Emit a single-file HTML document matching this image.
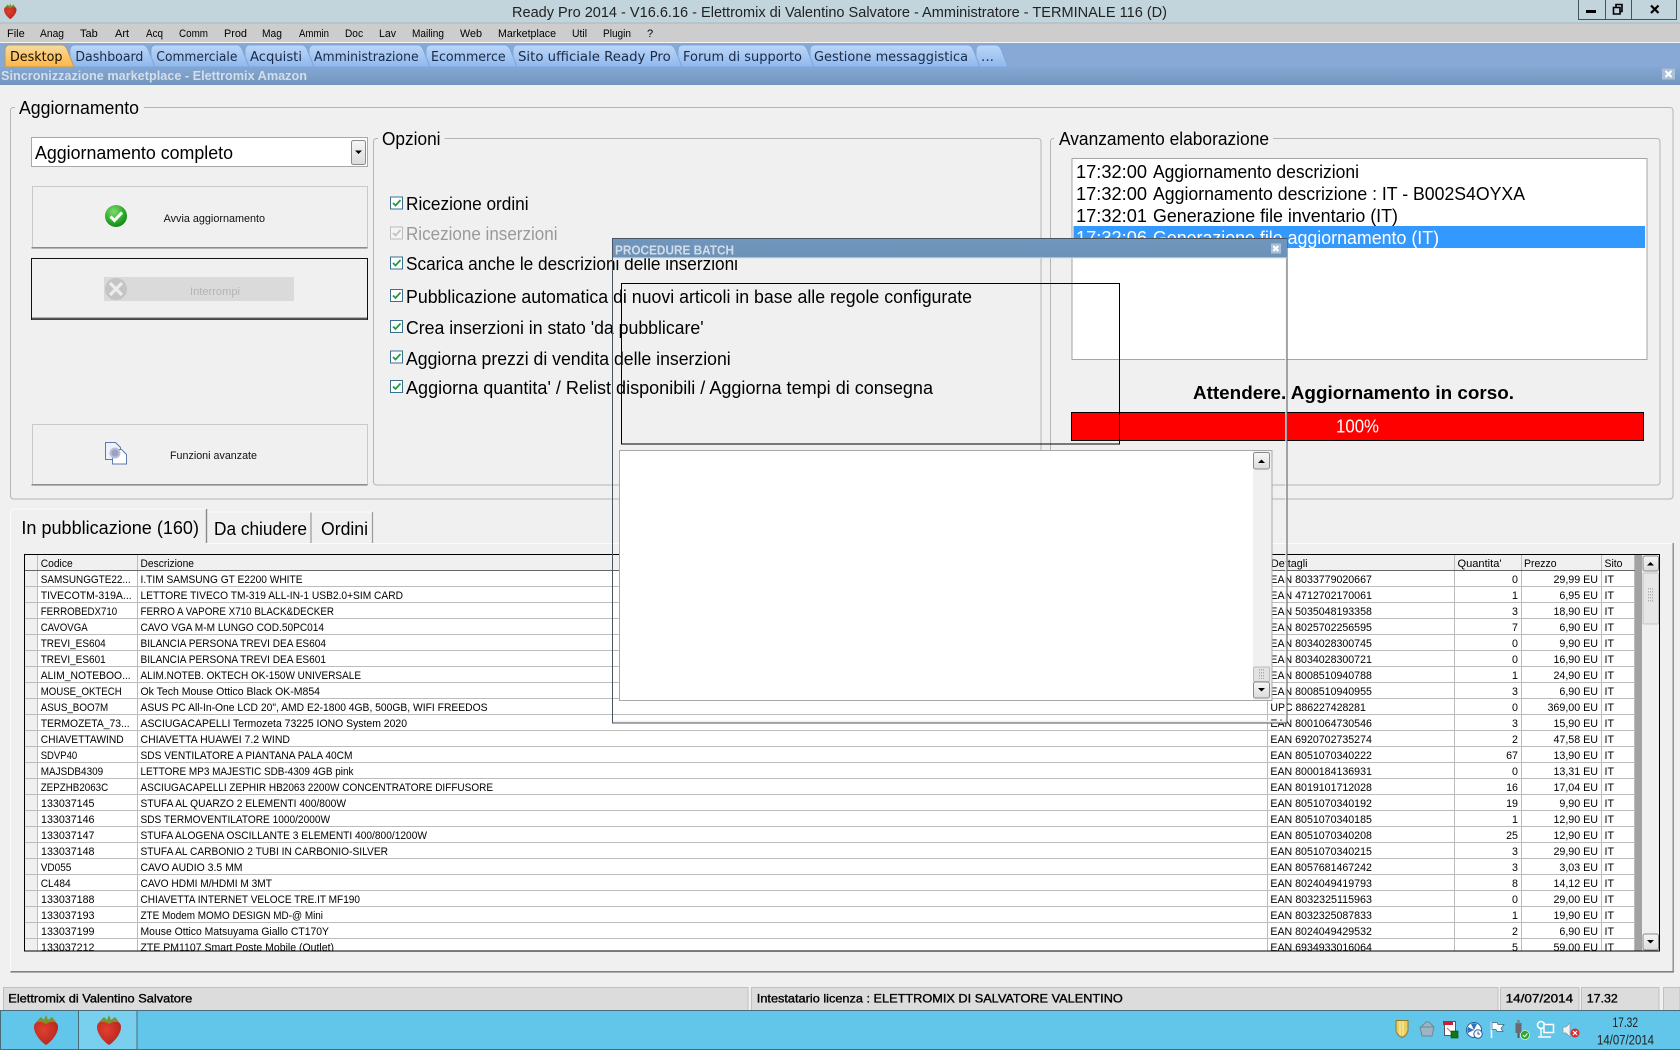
<!DOCTYPE html>
<html lang="it"><head><meta charset="utf-8"><title>Ready Pro 2014</title>
<style>
html,body{margin:0;padding:0;background:#f0f0f0;overflow:hidden;width:1680px;height:1050px}
svg{display:block}
text{font-family:"Liberation Sans",sans-serif;fill:#000}
.v text,text.v{font-family:"DejaVu Sans",sans-serif}
.m text{font-size:11px;fill:#000}
.tb text{font-size:13px;fill:#1c2a44}
.big text{font-size:18px}
.tbl text{font-size:10.7px;fill:#000}
.r text{text-anchor:end}
.st text{font-size:12px;fill:#000;stroke:#000;stroke-width:.35px}
</style></head><body>
<svg xmlns="http://www.w3.org/2000/svg" width="1680" height="1050" viewBox="0 0 1680 1050" shape-rendering="auto">
<defs>
<linearGradient id="gt" x1="0" y1="0" x2="0" y2="1"><stop offset="0" stop-color="#bcd7f8"/><stop offset="1" stop-color="#8fb8ee"/></linearGradient>
<linearGradient id="go" x1="0" y1="0" x2="0" y2="1"><stop offset="0" stop-color="#f6dca0"/><stop offset="1" stop-color="#ffb545"/></linearGradient>
<linearGradient id="gw" x1="0" y1="0" x2="0" y2="1"><stop offset="0" stop-color="#84a8d4"/><stop offset="1" stop-color="#7296bc"/></linearGradient>
<linearGradient id="gd" x1="0" y1="0" x2="0" y2="1"><stop offset="0" stop-color="#7096bd"/><stop offset="1" stop-color="#6d92b8"/></linearGradient>
<linearGradient id="gb" x1="0" y1="0" x2="0" y2="1"><stop offset="0" stop-color="#f6f6f6"/><stop offset="1" stop-color="#dcdcdc"/></linearGradient>
<radialGradient id="gc" cx=".4" cy=".3" r=".8"><stop offset="0" stop-color="#7fdc6a"/><stop offset=".6" stop-color="#2aa92a"/><stop offset="1" stop-color="#0c7a12"/></radialGradient>
<radialGradient id="gs" cx=".4" cy=".4" r=".7"><stop offset="0" stop-color="#e0402e"/><stop offset="1" stop-color="#b3231f"/></radialGradient>
<g id="s">
<path d="M13,31 C8,28 1,20 1,13 C1,8 6,6 13,6 C20,6 25,8 25,13 C25,20 18,28 13,31Z" fill="url(#gs)"/>
<path d="M3,8 L8,3 L11,6 L13,1 L15,6 L19,3 L23,8 L17,8 L13,10 L9,8Z" fill="#7f8f2c"/>
</g>
</defs>

<!-- Title bar -->
<rect x="0" y="0" width="1680" height="23" fill="#c2d5dc"/>
<rect x="0" y="22.5" width="1680" height="1" fill="#a9b6bc"/>
<use href="#s" transform="translate(3.5,3) scale(.52)"/>
<text x="512" y="17" font-size="15" fill="#222" textLength="655" lengthAdjust="spacingAndGlyphs" style="fill:#222">Ready Pro 2014 - V16.6.16 - Elettromix di Valentino Salvatore - Amministratore - TERMINALE 116 (D)</text>
<path d="M1578.5,0V19.5H1676.5V0M1605.5,0V19.5M1631.5,0V19.5" fill="none" stroke="#47535c"/>
<rect x="1586" y="10" width="10" height="3" fill="#000"/>
<path d="M1613.5,7.5h6.5v6.5h-6.5zM1616,7v-2.5h6v7h-2" fill="none" stroke="#000" stroke-width="1.6"/>
<path d="M1651,5.5l7.5,7.5M1658.5,5.5l-7.5,7.5" stroke="#000" stroke-width="2.2" fill="none"/>

<!-- Menu -->
<rect x="0" y="23.5" width="1680" height="19" fill="#cdcdcd"/>
<rect x="0" y="42" width="1680" height="1.2" fill="#f4f4f4"/>
<g class="m">
<text x="7" y="37">File</text><text x="40" y="37" textLength="24" lengthAdjust="spacingAndGlyphs">Anag</text><text x="80" y="37">Tab</text><text x="115" y="37">Art</text><text x="146" y="37" textLength="17" lengthAdjust="spacingAndGlyphs">Acq</text><text x="179" y="37" textLength="29" lengthAdjust="spacingAndGlyphs">Comm</text><text x="224" y="37" textLength="23" lengthAdjust="spacingAndGlyphs">Prod</text><text x="262" y="37" textLength="20" lengthAdjust="spacingAndGlyphs">Mag</text><text x="299" y="37" textLength="30" lengthAdjust="spacingAndGlyphs">Ammin</text><text x="345" y="37" textLength="18" lengthAdjust="spacingAndGlyphs">Doc</text><text x="379" y="37" textLength="17" lengthAdjust="spacingAndGlyphs">Lav</text><text x="412" y="37" textLength="32" lengthAdjust="spacingAndGlyphs">Mailing</text><text x="460" y="37" textLength="22" lengthAdjust="spacingAndGlyphs">Web</text><text x="498" y="37" textLength="58" lengthAdjust="spacingAndGlyphs">Marketplace</text><text x="572" y="37" textLength="15" lengthAdjust="spacingAndGlyphs">Util</text><text x="603" y="37" textLength="28" lengthAdjust="spacingAndGlyphs">Plugin</text><text x="647" y="37">?</text>
</g>

<!-- Tab bar -->
<rect x="0" y="43" width="1680" height="24" fill="#88a9d6"/>
<g fill="url(#gt)" stroke="#7fa5d8" stroke-width="1">
<path d="M976,67V50Q976,45 981,45H996Q999,45 1001,49L1008,67Z"/>
<path d="M810,67V50Q810,45 815,45H968Q971,45 973,49L980,67Z"/>
<path d="M678,67V50Q678,45 683,45H802Q805,45 807,49L814,67Z"/>
<path d="M513,67V50Q513,45 518,45H670Q673,45 675,49L682,67Z"/>
<path d="M426,67V50Q426,45 431,45H505Q508,45 510,49L517,67Z"/>
<path d="M309,67V50Q309,45 314,45H418Q421,45 423,49L430,67Z"/>
<path d="M245,67V50Q245,45 250,45H302Q305,45 307,49L314,67Z"/>
<path d="M151,67V50Q151,45 156,45H237Q240,45 242,49L249,67Z"/>
<path d="M70,67V50Q70,45 75,45H143Q146,45 148,49L155,67Z"/>
</g>
<path d="M5,67V50Q5,45 10,45H62Q65,45 67,49L74,67Z" fill="url(#go)" stroke="#b39a6a"/>
<g class="tb v">
<text x="10" y="61" textLength="52.5" lengthAdjust="spacingAndGlyphs" style="fill:#1a1200">Desktop</text>
<text x="75.4" y="61" textLength="68" lengthAdjust="spacingAndGlyphs">Dashboard</text>
<text x="156.4" y="61" textLength="81" lengthAdjust="spacingAndGlyphs">Commerciale</text>
<text x="250" y="61" textLength="52" lengthAdjust="spacingAndGlyphs">Acquisti</text>
<text x="314" y="61" textLength="104.6" lengthAdjust="spacingAndGlyphs">Amministrazione</text>
<text x="431" y="61" textLength="74.7" lengthAdjust="spacingAndGlyphs">Ecommerce</text>
<text x="518" y="61" textLength="152.7" lengthAdjust="spacingAndGlyphs">Sito ufficiale Ready Pro</text>
<text x="683" y="61" textLength="119" lengthAdjust="spacingAndGlyphs">Forum di supporto</text>
<text x="814" y="61" textLength="154" lengthAdjust="spacingAndGlyphs">Gestione messaggistica</text>
<text x="981" y="61" textLength="13" lengthAdjust="spacingAndGlyphs">...</text>
</g>

<!-- Window title -->
<rect x="0" y="67" width="1680" height="18" fill="url(#gw)"/>
<text x="1" y="80" font-size="12.5" font-weight="bold" textLength="306" lengthAdjust="spacingAndGlyphs" style="fill:#d3deea">Sincronizzazione marketplace - Elettromix Amazon</text>
<rect x="1662" y="68.5" width="13" height="11" fill="#a9c0da"/>
<path d="M1665.5,71l6,6M1671.5,71l-6,6" stroke="#fff" stroke-width="2"/>

<!-- Group boxes -->
<g fill="none" stroke="#b4b4b4">
<rect x="10.5" y="107.5" width="1662.5" height="391.5" rx="3"/>
<rect x="373.5" y="138.5" width="667.5" height="346.5" rx="3"/>
<rect x="1050.5" y="138.5" width="609.5" height="346.5" rx="3"/>
</g>
<rect x="15" y="98" width="129" height="20" fill="#f0f0f0"/>
<rect x="378" y="129" width="66.5" height="20" fill="#f0f0f0"/>
<rect x="1054" y="129" width="219" height="20" fill="#f0f0f0"/>
<g class="big">
<text x="19" y="114" textLength="120" lengthAdjust="spacingAndGlyphs">Aggiornamento</text>
<text x="382" y="145" textLength="58.5" lengthAdjust="spacingAndGlyphs">Opzioni</text>
<text x="1059" y="145" textLength="210" lengthAdjust="spacingAndGlyphs">Avanzamento elaborazione</text>
</g>

<!-- Combo -->
<rect x="31.5" y="137.5" width="336" height="29" fill="#fff" stroke="#a8a8a8"/>
<text x="35" y="159" font-size="18" textLength="198" lengthAdjust="spacingAndGlyphs">Aggiornamento completo</text>
<rect x="351.5" y="140.5" width="14" height="24" rx="2" fill="url(#gb)" stroke="#8a8a8a"/>
<path d="M355,150.5h7l-3.5,3.5z" fill="#000"/>

<!-- Buttons -->
<rect x="32.5" y="186.5" width="335" height="61" fill="#f0f0f0" stroke="#c9c9c9"/>
<rect x="31.5" y="247" width="336" height="1.6" fill="#8c8c8c"/>
<circle cx="116" cy="216" r="11" fill="url(#gc)"/>
<path d="M110.5,216.5l4,4l7.5,-8" fill="none" stroke="#fff" stroke-width="3"/>
<text x="163.6" y="222" font-size="11" textLength="101.5" lengthAdjust="spacingAndGlyphs" style="fill:#111">Avvia aggiornamento</text>

<rect x="31.5" y="258.5" width="336" height="61" fill="#f0f0f0" stroke="#111" stroke-width="1"/>
<rect x="32" y="317.6" width="335" height="2.2" fill="#555"/>
<rect x="104" y="277" width="190" height="24" fill="#dadada"/>
<circle cx="116" cy="289" r="11" fill="#c4c4c4"/>
<path d="M110,283l12,12M122,283l-12,12" stroke="#ececec" stroke-width="3.2"/>
<text x="190" y="295" font-size="11" textLength="50" lengthAdjust="spacingAndGlyphs" style="fill:#b4b4b4">Interrompi</text>

<rect x="32.5" y="424.5" width="335" height="60" fill="#f0f0f0" stroke="#c9c9c9"/>
<rect x="31.5" y="484" width="336" height="1.6" fill="#8c8c8c"/>
<path d="M105.5,442.5h10l5,5v12h-15z" fill="#eef3fb" stroke="#5f79ad"/>
<path d="M112.5,449.5h9l5,5v9.5h-14z" fill="#fff" stroke="#5f79ad"/>
<circle cx="115" cy="453" r="4.5" fill="#9aa2c4" stroke="#b9bfd8" stroke-width="2"/>
<text x="170" y="459" font-size="11" textLength="87" lengthAdjust="spacingAndGlyphs" style="fill:#111">Funzioni avanzate</text>

<!-- Options -->
<g fill="#fff" stroke="#3a6f8f">
<rect x="390.5" y="197" width="12" height="12"/>
<rect x="390.5" y="257" width="12" height="12"/>
<rect x="390.5" y="289.5" width="12" height="12"/>
<rect x="390.5" y="320.5" width="12" height="12"/>
<rect x="390.5" y="351" width="12" height="12"/>
<rect x="390.5" y="380.5" width="12" height="12"/>
</g>
<rect x="390.5" y="227" width="12" height="12" fill="#f4f4f4" stroke="#bdbdbd"/>
<g fill="none" stroke="#1f9c3a" stroke-width="1.8">
<path d="M393,203l2.5,2.5l5,-5.5"/><path d="M393,263l2.5,2.5l5,-5.5"/><path d="M393,295.5l2.5,2.5l5,-5.5"/><path d="M393,326.5l2.5,2.5l5,-5.5"/><path d="M393,357l2.5,2.5l5,-5.5"/><path d="M393,386.5l2.5,2.5l5,-5.5"/>
</g>
<path d="M393,233l2.5,2.5l5,-5.5" fill="none" stroke="#c2c2c2" stroke-width="1.8"/>
<g class="big">
<text x="406" y="210" textLength="122.6" lengthAdjust="spacingAndGlyphs">Ricezione ordini</text>
<text x="406" y="240" textLength="151.5" lengthAdjust="spacingAndGlyphs" style="fill:#9a9a9a">Ricezione inserzioni</text>
<text x="406" y="270" textLength="332" lengthAdjust="spacingAndGlyphs">Scarica anche le descrizioni delle inserzioni</text>
<text x="406" y="303" textLength="566" lengthAdjust="spacingAndGlyphs">Pubblicazione automatica di nuovi articoli in base alle regole configurate</text>
<text x="406" y="334" textLength="297.6" lengthAdjust="spacingAndGlyphs">Crea inserzioni in stato 'da pubblicare'</text>
<text x="406" y="365" textLength="324.7" lengthAdjust="spacingAndGlyphs">Aggiorna prezzi di vendita delle inserzioni</text>
<text x="406" y="394" textLength="527" lengthAdjust="spacingAndGlyphs">Aggiorna quantita' / Relist disponibili / Aggiorna tempi di consegna</text>
</g>

<!-- List -->
<rect x="1072" y="158.5" width="575" height="201" fill="#fff" stroke="#a4a4a4"/>
<rect x="1073.5" y="226" width="571.5" height="22" fill="#3399ff"/>
<g class="big">
<text x="1076" y="178" textLength="71" lengthAdjust="spacingAndGlyphs">17:32:00</text><text x="1153" y="178" textLength="206" lengthAdjust="spacingAndGlyphs">Aggiornamento descrizioni</text>
<text x="1076" y="200" textLength="71" lengthAdjust="spacingAndGlyphs">17:32:00</text><text x="1153" y="200" textLength="372" lengthAdjust="spacingAndGlyphs">Aggiornamento descrizione : IT - B002S4OYXA</text>
<text x="1076" y="222" textLength="71" lengthAdjust="spacingAndGlyphs">17:32:01</text><text x="1153" y="222" textLength="245" lengthAdjust="spacingAndGlyphs">Generazione file inventario (IT)</text>
<text x="1076" y="244" textLength="71" lengthAdjust="spacingAndGlyphs" style="fill:#fff">17:32:06</text><text x="1153" y="244" textLength="286" lengthAdjust="spacingAndGlyphs" style="fill:#fff">Generazione file aggiornamento (IT)</text>
</g>
<text x="1193" y="399" font-size="18" font-weight="bold" textLength="321" lengthAdjust="spacingAndGlyphs">Attendere. Aggiornamento in corso.</text>
<rect x="1071.5" y="412.5" width="572" height="28" fill="#f00" stroke="#000"/>
<text x="1336" y="432.5" font-size="18" textLength="43" lengthAdjust="spacingAndGlyphs" style="fill:#fff">100%</text>

<!-- Tab panel -->
<path d="M206,543.5H1673" stroke="#fbfbfb" fill="none"/>
<path d="M1673.2,543V972" stroke="#8a8a8a" stroke-width="1.4"/>
<path d="M10.5,543V971" stroke="#fbfbfb"/>
<rect x="10.5" y="971" width="1663.5" height="1.6" fill="#808080"/>
<path d="M10.5,543V513Q10.5,509 14,509H206.5V543" fill="#f0f0f0" stroke="#fafafa"/>
<path d="M206.5,509V543" stroke="#8a8a8a" stroke-width="1.4"/>
<path d="M311,512V543M372.5,512V543" stroke="#9a9a9a" stroke-width="1.2"/>
<path d="M208,512H372" stroke="#fafafa"/>
<g class="big">
<text x="21.4" y="534" textLength="177.6" lengthAdjust="spacingAndGlyphs">In pubblicazione (160)</text>
<text x="214" y="535" textLength="93" lengthAdjust="spacingAndGlyphs">Da chiudere</text>
<text x="321" y="535" textLength="47" lengthAdjust="spacingAndGlyphs">Ordini</text>
</g>

<!-- Table -->
<rect x="24.5" y="554.5" width="1635" height="396.5" fill="#fff"/>
<rect x="25" y="555" width="1610" height="15" fill="#f0f0f0"/>
<rect x="25" y="570" width="12.5" height="381" fill="#f0f0f0"/>
<rect x="1635" y="555" width="7" height="396" fill="#a2a2a2"/>
<rect x="1642" y="555" width="17" height="396" fill="#f0f0f0"/>
<path d="M25,586.5H1635M25,602.5H1635M25,618.5H1635M25,634.5H1635M25,650.5H1635M25,666.5H1635M25,682.5H1635M25,698.5H1635M25,714.5H1635M25,730.5H1635M25,746.5H1635M25,762.5H1635M25,778.5H1635M25,794.5H1635M25,810.5H1635M25,826.5H1635M25,842.5H1635M25,858.5H1635M25,874.5H1635M25,890.5H1635M25,906.5H1635M25,922.5H1635M25,938.5H1635" stroke="#bcbcbc" fill="none"/>
<path d="M37.5,555V951M137.5,555V951M1267.5,555V951M1454.5,555V951M1521.5,555V951M1601.5,555V951M1634.5,555V951" stroke="#bcbcbc" fill="none"/>
<path d="M25,570.5H1635" stroke="#666"/>
<rect x="24.5" y="554.5" width="1635" height="396.5" fill="none" stroke="#000"/>
<rect x="1643" y="556" width="15.5" height="15" rx="2" fill="url(#gb)" stroke="#8a8a8a"/>
<path d="M1647,565.5h7l-3.5,-3.5z" fill="#000"/>
<rect x="1643" y="573" width="15.5" height="51" rx="1" fill="#e6e6e6" stroke="#c4c4c4"/>
<path d="M1648.5,588v14M1650.5,588v14M1652.5,588v14" stroke="#b0b0b0" stroke-dasharray="1.5 1.5"/>
<rect x="1643" y="934" width="15.5" height="16" rx="2" fill="url(#gb)" stroke="#8a8a8a"/>
<path d="M1647,940h7l-3.5,3.5z" fill="#000"/>

<svg x="0" y="0" width="1680" height="950.5" viewBox="0 0 1680 950.5">
<g class="tbl">
<text x="40.7" y="567" textLength="32" lengthAdjust="spacingAndGlyphs">Codice</text>
<text x="140.5" y="567" textLength="53.5" lengthAdjust="spacingAndGlyphs">Descrizione</text>
<text x="1271" y="567" textLength="36.5" lengthAdjust="spacingAndGlyphs">Dettagli</text>
<text x="1457.5" y="567" textLength="44" lengthAdjust="spacingAndGlyphs">Quantita'</text>
<text x="1524" y="567" textLength="32.5" lengthAdjust="spacingAndGlyphs">Prezzo</text>
<text x="1604.5" y="567" textLength="18" lengthAdjust="spacingAndGlyphs">Sito</text>

<text x="40.7" y="583" textLength="90" lengthAdjust="spacingAndGlyphs">SAMSUNGGTE22...</text>
<text x="40.7" y="599" textLength="91" lengthAdjust="spacingAndGlyphs">TIVECOTM-319A...</text>
<text x="40.7" y="615" textLength="76.5" lengthAdjust="spacingAndGlyphs">FERROBEDX710</text>
<text x="40.7" y="631" textLength="47" lengthAdjust="spacingAndGlyphs">CAVOVGA</text>
<text x="40.7" y="647" textLength="65" lengthAdjust="spacingAndGlyphs">TREVI_ES604</text>
<text x="40.7" y="663" textLength="65" lengthAdjust="spacingAndGlyphs">TREVI_ES601</text>
<text x="40.7" y="679" textLength="90" lengthAdjust="spacingAndGlyphs">ALIM_NOTEBOO...</text>
<text x="40.7" y="695" textLength="81" lengthAdjust="spacingAndGlyphs">MOUSE_OKTECH</text>
<text x="40.7" y="711" textLength="67.5" lengthAdjust="spacingAndGlyphs">ASUS_BOO7M</text>
<text x="40.7" y="727" textLength="89" lengthAdjust="spacingAndGlyphs">TERMOZETA_73...</text>
<text x="40.7" y="743" textLength="83" lengthAdjust="spacingAndGlyphs">CHIAVETTAWIND</text>
<text x="40.7" y="759" textLength="36.5" lengthAdjust="spacingAndGlyphs">SDVP40</text>
<text x="40.7" y="775" textLength="62.5" lengthAdjust="spacingAndGlyphs">MAJSDB4309</text>
<text x="40.7" y="791" textLength="67.5" lengthAdjust="spacingAndGlyphs">ZEPZHB2063C</text>
<text x="41" y="807" textLength="53.5" lengthAdjust="spacingAndGlyphs">133037145</text>
<text x="41" y="823" textLength="53.5" lengthAdjust="spacingAndGlyphs">133037146</text>
<text x="41" y="839" textLength="53.5" lengthAdjust="spacingAndGlyphs">133037147</text>
<text x="41" y="855" textLength="53.5" lengthAdjust="spacingAndGlyphs">133037148</text>
<text x="40.7" y="871" textLength="30.7" lengthAdjust="spacingAndGlyphs">VD055</text>
<text x="40.7" y="887" textLength="30" lengthAdjust="spacingAndGlyphs">CL484</text>
<text x="41" y="903" textLength="53.5" lengthAdjust="spacingAndGlyphs">133037188</text>
<text x="41" y="919" textLength="53.5" lengthAdjust="spacingAndGlyphs">133037193</text>
<text x="41" y="935" textLength="53.5" lengthAdjust="spacingAndGlyphs">133037199</text>
<text x="41" y="951" textLength="53.5" lengthAdjust="spacingAndGlyphs">133037212</text>

<text x="140.5" y="583" textLength="162" lengthAdjust="spacingAndGlyphs">I.TIM SAMSUNG GT E2200 WHITE</text>
<text x="140.5" y="599" textLength="262.5" lengthAdjust="spacingAndGlyphs">LETTORE TIVECO TM-319 ALL-IN-1 USB2.0+SIM CARD</text>
<text x="140.5" y="615" textLength="193.5" lengthAdjust="spacingAndGlyphs">FERRO A VAPORE X710 BLACK&amp;DECKER</text>
<text x="140.5" y="631" textLength="183.5" lengthAdjust="spacingAndGlyphs">CAVO VGA M-M LUNGO COD.50PC014</text>
<text x="140.5" y="647" textLength="185.5" lengthAdjust="spacingAndGlyphs">BILANCIA PERSONA TREVI DEA ES604</text>
<text x="140.5" y="663" textLength="185.5" lengthAdjust="spacingAndGlyphs">BILANCIA PERSONA TREVI DEA ES601</text>
<text x="140.5" y="679" textLength="220.5" lengthAdjust="spacingAndGlyphs">ALIM.NOTEB. OKTECH OK-150W UNIVERSALE</text>
<text x="140.5" y="695" textLength="179.5" lengthAdjust="spacingAndGlyphs">Ok Tech Mouse Ottico Black OK-M854</text>
<text x="140.5" y="711" textLength="347" lengthAdjust="spacingAndGlyphs">ASUS PC All-In-One LCD 20", AMD E2-1800 4GB, 500GB, WIFI FREEDOS</text>
<text x="140.5" y="727" textLength="266.5" lengthAdjust="spacingAndGlyphs">ASCIUGACAPELLI Termozeta 73225 IONO System 2020</text>
<text x="140.5" y="743" textLength="149.5" lengthAdjust="spacingAndGlyphs">CHIAVETTA HUAWEI 7.2 WIND</text>
<text x="140.5" y="759" textLength="212" lengthAdjust="spacingAndGlyphs">SDS VENTILATORE A PIANTANA PALA 40CM</text>
<text x="140.5" y="775" textLength="213" lengthAdjust="spacingAndGlyphs">LETTORE MP3 MAJESTIC SDB-4309 4GB pink</text>
<text x="140.5" y="791" textLength="352.5" lengthAdjust="spacingAndGlyphs">ASCIUGACAPELLI ZEPHIR HB2063 2200W CONCENTRATORE DIFFUSORE</text>
<text x="140.5" y="807" textLength="205.5" lengthAdjust="spacingAndGlyphs">STUFA AL QUARZO 2 ELEMENTI 400/800W</text>
<text x="140.5" y="823" textLength="189.5" lengthAdjust="spacingAndGlyphs">SDS TERMOVENTILATORE 1000/2000W</text>
<text x="140.5" y="839" textLength="286.5" lengthAdjust="spacingAndGlyphs">STUFA ALOGENA OSCILLANTE 3 ELEMENTI 400/800/1200W</text>
<text x="140.5" y="855" textLength="247.5" lengthAdjust="spacingAndGlyphs">STUFA AL CARBONIO 2 TUBI IN CARBONIO-SILVER</text>
<text x="140.5" y="871" textLength="102" lengthAdjust="spacingAndGlyphs">CAVO AUDIO 3.5 MM</text>
<text x="140.5" y="887" textLength="131.5" lengthAdjust="spacingAndGlyphs">CAVO HDMI M/HDMI M 3MT</text>
<text x="140.5" y="903" textLength="219.5" lengthAdjust="spacingAndGlyphs">CHIAVETTA INTERNET VELOCE TRE.IT MF190</text>
<text x="140.5" y="919" textLength="182.5" lengthAdjust="spacingAndGlyphs">ZTE Modem MOMO DESIGN MD-@ Mini</text>
<text x="140.5" y="935" textLength="188.5" lengthAdjust="spacingAndGlyphs">Mouse Ottico Matsuyama Giallo CT170Y</text>
<text x="140.5" y="951" textLength="193.5" lengthAdjust="spacingAndGlyphs">ZTE PM1107 Smart Poste Mobile (Outlet)</text>

<text x="1270.4" y="583" textLength="101.5" lengthAdjust="spacingAndGlyphs">EAN 8033779020667</text>
<text x="1270.4" y="599" textLength="101.5" lengthAdjust="spacingAndGlyphs">EAN 4712702170061</text>
<text x="1270.4" y="615" textLength="101.5" lengthAdjust="spacingAndGlyphs">EAN 5035048193358</text>
<text x="1270.4" y="631" textLength="101.5" lengthAdjust="spacingAndGlyphs">EAN 8025702256595</text>
<text x="1270.4" y="647" textLength="101.5" lengthAdjust="spacingAndGlyphs">EAN 8034028300745</text>
<text x="1270.4" y="663" textLength="101.5" lengthAdjust="spacingAndGlyphs">EAN 8034028300721</text>
<text x="1270.4" y="679" textLength="101.5" lengthAdjust="spacingAndGlyphs">EAN 8008510940788</text>
<text x="1270.4" y="695" textLength="101.5" lengthAdjust="spacingAndGlyphs">EAN 8008510940955</text>
<text x="1270.4" y="711" textLength="95.5" lengthAdjust="spacingAndGlyphs">UPC 886227428281</text>
<text x="1270.4" y="727" textLength="101.5" lengthAdjust="spacingAndGlyphs">EAN 8001064730546</text>
<text x="1270.4" y="743" textLength="101.5" lengthAdjust="spacingAndGlyphs">EAN 6920702735274</text>
<text x="1270.4" y="759" textLength="101.5" lengthAdjust="spacingAndGlyphs">EAN 8051070340222</text>
<text x="1270.4" y="775" textLength="101.5" lengthAdjust="spacingAndGlyphs">EAN 8000184136931</text>
<text x="1270.4" y="791" textLength="101.5" lengthAdjust="spacingAndGlyphs">EAN 8019101712028</text>
<text x="1270.4" y="807" textLength="101.5" lengthAdjust="spacingAndGlyphs">EAN 8051070340192</text>
<text x="1270.4" y="823" textLength="101.5" lengthAdjust="spacingAndGlyphs">EAN 8051070340185</text>
<text x="1270.4" y="839" textLength="101.5" lengthAdjust="spacingAndGlyphs">EAN 8051070340208</text>
<text x="1270.4" y="855" textLength="101.5" lengthAdjust="spacingAndGlyphs">EAN 8051070340215</text>
<text x="1270.4" y="871" textLength="101.5" lengthAdjust="spacingAndGlyphs">EAN 8057681467242</text>
<text x="1270.4" y="887" textLength="101.5" lengthAdjust="spacingAndGlyphs">EAN 8024049419793</text>
<text x="1270.4" y="903" textLength="101.5" lengthAdjust="spacingAndGlyphs">EAN 8032325115963</text>
<text x="1270.4" y="919" textLength="101.5" lengthAdjust="spacingAndGlyphs">EAN 8032325087833</text>
<text x="1270.4" y="935" textLength="101.5" lengthAdjust="spacingAndGlyphs">EAN 8024049429532</text>
<text x="1270.4" y="951" textLength="101.5" lengthAdjust="spacingAndGlyphs">EAN 6934933016064</text>

<g class="r">
<text x="1518" y="583">0</text><text x="1518" y="599">1</text><text x="1518" y="615">3</text><text x="1518" y="631">7</text><text x="1518" y="647">0</text><text x="1518" y="663">0</text><text x="1518" y="679">1</text><text x="1518" y="695">3</text><text x="1518" y="711">0</text><text x="1518" y="727">3</text><text x="1518" y="743">2</text><text x="1518" y="759">67</text><text x="1518" y="775">0</text><text x="1518" y="791">16</text><text x="1518" y="807">19</text><text x="1518" y="823">1</text><text x="1518" y="839">25</text><text x="1518" y="855">3</text><text x="1518" y="871">3</text><text x="1518" y="887">8</text><text x="1518" y="903">0</text><text x="1518" y="919">1</text><text x="1518" y="935">2</text><text x="1518" y="951">5</text>
<text x="1598" y="583">29,99 EU</text><text x="1598" y="599">6,95 EU</text><text x="1598" y="615">18,90 EU</text><text x="1598" y="631">6,90 EU</text><text x="1598" y="647">9,90 EU</text><text x="1598" y="663">16,90 EU</text><text x="1598" y="679">24,90 EU</text><text x="1598" y="695">6,90 EU</text><text x="1598" y="711">369,00 EU</text><text x="1598" y="727">15,90 EU</text><text x="1598" y="743">47,58 EU</text><text x="1598" y="759">13,90 EU</text><text x="1598" y="775">13,31 EU</text><text x="1598" y="791">17,04 EU</text><text x="1598" y="807">9,90 EU</text><text x="1598" y="823">12,90 EU</text><text x="1598" y="839">12,90 EU</text><text x="1598" y="855">29,90 EU</text><text x="1598" y="871">3,03 EU</text><text x="1598" y="887">14,12 EU</text><text x="1598" y="903">29,00 EU</text><text x="1598" y="919">19,90 EU</text><text x="1598" y="935">6,90 EU</text><text x="1598" y="951">59,00 EU</text>
</g>
<text x="1604.5" y="583">IT</text><text x="1604.5" y="599">IT</text><text x="1604.5" y="615">IT</text><text x="1604.5" y="631">IT</text><text x="1604.5" y="647">IT</text><text x="1604.5" y="663">IT</text><text x="1604.5" y="679">IT</text><text x="1604.5" y="695">IT</text><text x="1604.5" y="711">IT</text><text x="1604.5" y="727">IT</text><text x="1604.5" y="743">IT</text><text x="1604.5" y="759">IT</text><text x="1604.5" y="775">IT</text><text x="1604.5" y="791">IT</text><text x="1604.5" y="807">IT</text><text x="1604.5" y="823">IT</text><text x="1604.5" y="839">IT</text><text x="1604.5" y="855">IT</text><text x="1604.5" y="871">IT</text><text x="1604.5" y="887">IT</text><text x="1604.5" y="903">IT</text><text x="1604.5" y="919">IT</text><text x="1604.5" y="935">IT</text><text x="1604.5" y="951">IT</text>
</g>
</svg>

<!-- Ghost dialog -->
<rect x="1285.3" y="258" width="1.7" height="465" fill="#f4f4f4"/>
<rect x="613" y="720.5" width="674" height="2" fill="#f0f0f0"/>
<rect x="612.5" y="238.5" width="674.5" height="484.5" fill="none" stroke="#4a545e"/>
<rect x="613" y="239" width="674" height="19" fill="url(#gd)"/>
<rect x="613" y="257.3" width="674" height="1" fill="#c9d4de"/>
<text x="615" y="254.5" font-size="12.5" font-weight="bold" textLength="119" lengthAdjust="spacingAndGlyphs" style="fill:#d3dde8">PROCEDURE BATCH</text>
<rect x="1271" y="243.5" width="10" height="10" fill="#a9c0da"/>
<path d="M1273.3,246l5,5M1278.3,246l-5,5" stroke="#fff" stroke-width="2"/>
<rect x="621.5" y="283.5" width="498" height="160.5" fill="none" stroke="#000"/>
<rect x="619.5" y="450.5" width="652.5" height="250" fill="#fff" stroke="#a8a8a8"/>
<rect x="1253" y="451" width="18.5" height="249" fill="#f0f0f0"/>
<rect x="1253.5" y="452.5" width="16" height="16.5" rx="2" fill="url(#gb)" stroke="#8a8a8a"/>
<path d="M1258,463h7l-3.5,-3.5z" fill="#000"/>
<rect x="1253.5" y="667" width="16" height="14.5" rx="1" fill="#e2e2e2" stroke="#bcbcbc"/>
<path d="M1259.5,669v10M1261.5,669v10M1263.5,669v10" stroke="#aaa" stroke-dasharray="1.5 1.5"/>
<rect x="1253.5" y="682" width="16" height="16" rx="2" fill="url(#gb)" stroke="#8a8a8a"/>
<path d="M1258,688h7l-3.5,3.5z" fill="#000"/>

<!-- Status bar -->
<g fill="#dcdcdc" stroke="#c0c0c0">
<path d="M3.5,1010V987.5H748V1010"/>
<path d="M751.5,1010V987.5H1498V1010"/>
<path d="M1500.5,1010V987.5H1579V1010"/>
<path d="M1581.5,1010V987.5H1659V1010"/>
<path d="M1663.5,1010V987.5H1680V1010"/>
</g>
<g class="st">
<text x="8.3" y="1002.5" textLength="184" lengthAdjust="spacingAndGlyphs">Elettromix di Valentino Salvatore</text>
<text x="756.8" y="1002.5" textLength="366" lengthAdjust="spacingAndGlyphs">Intestatario licenza : ELETTROMIX DI SALVATORE VALENTINO</text>
<text x="1505.7" y="1002.5" textLength="67.5" lengthAdjust="spacingAndGlyphs">14/07/2014</text>
<text x="1586.8" y="1002.5" textLength="31" lengthAdjust="spacingAndGlyphs">17.32</text>
</g>

<!-- Taskbar -->
<rect x="0" y="1010" width="1680" height="40" fill="#62c6ea"/>
<rect x="78" y="1011" width="59" height="38" fill="#78cfee"/>
<path d="M0,1010.5H1680M0.5,1010V1050M78.5,1010V1050M137,1010V1050M0,1049.5H1680" stroke="#4b6a78" fill="none"/>
<use href="#s" transform="translate(33,1014)"/>
<use href="#s" transform="translate(96,1014)"/>

<!-- Tray -->
<path d="M1396,1020.5h12v10q-1,5 -6,7q-5,-2 -6,-7z" fill="#e8cf63" stroke="#8d7a2a"/>
<path d="M1400,1021v14M1403,1021v14" stroke="#fff3b0"/>
<path d="M1420,1027h14l-2,9h-10zM1421,1027l5,-5h3l5,5" fill="#9db4c2" stroke="#6f8795"/>
<rect x="1444.5" y="1021.5" width="11" height="14" fill="#fff" stroke="#555"/>
<rect x="1443" y="1021" width="10" height="4" fill="#c8203a"/>
<path d="M1447,1028l4,4" stroke="#e0607a"/>
<rect x="1451" y="1031" width="7" height="7" fill="#0e7a0e" stroke="#064a06" stroke-width=".6"/>
<circle cx="1474" cy="1030" r="7.5" fill="#fff" stroke="#2a5d9a"/>
<path d="M1474,1030l-3,-6a7,7 0 0 1 6,0zM1474,1030l-6,3a7,7 0 0 1 0,-6z" fill="#2f74c0"/>
<circle cx="1478" cy="1034" r="4.2" fill="#fff" stroke="#2a5d9a"/>
<path d="M1478,1031.5v2.5h2" fill="none" stroke="#2a5d9a"/>
<path d="M1491.5,1022v16" stroke="#eef8ff" stroke-width="1.6"/>
<path d="M1492,1022.5h5l1,2h6l-3,4l2,3h-6l-1,-2h-4z" fill="#fff" stroke="#41606f" stroke-width=".7"/>
<rect x="1515.5" y="1023" width="6" height="10" fill="#6a6a6a"/>
<rect x="1517" y="1020" width="3" height="3.5" fill="#888"/>
<path d="M1518.5,1033v5" stroke="#555" stroke-width="2"/>
<circle cx="1525" cy="1035" r="4.5" fill="#2aa92a" stroke="#fff" stroke-width=".6"/>
<path d="M1522.8,1035l1.8,1.8l2.8,-3.4" fill="none" stroke="#fff"/>
<circle cx="1541" cy="1025" r="3.5" fill="none" stroke="#fff" stroke-width="1.6"/>
<rect x="1544" y="1024.5" width="9.5" height="8" fill="#5bbde2" stroke="#fff" stroke-width="1.5"/>
<path d="M1541,1028v8M1538,1037h13" stroke="#fff" stroke-width="1.4"/>
<path d="M1563,1027h3l4,-4v14l-4,-4h-3z" fill="#f2f2f2" stroke="#8a9aa2" stroke-width=".7"/>
<circle cx="1575" cy="1033" r="4.5" fill="#d9302f"/>
<path d="M1573,1031l4,4M1577,1031l-4,4" stroke="#fff" stroke-width="1.2"/>
<text x="1612.5" y="1027" font-size="14" textLength="25.5" lengthAdjust="spacingAndGlyphs" style="fill:#222">17.32</text>
<text x="1597" y="1044.5" font-size="14" textLength="57" lengthAdjust="spacingAndGlyphs" style="fill:#222">14/07/2014</text>
</svg>
</body></html>
